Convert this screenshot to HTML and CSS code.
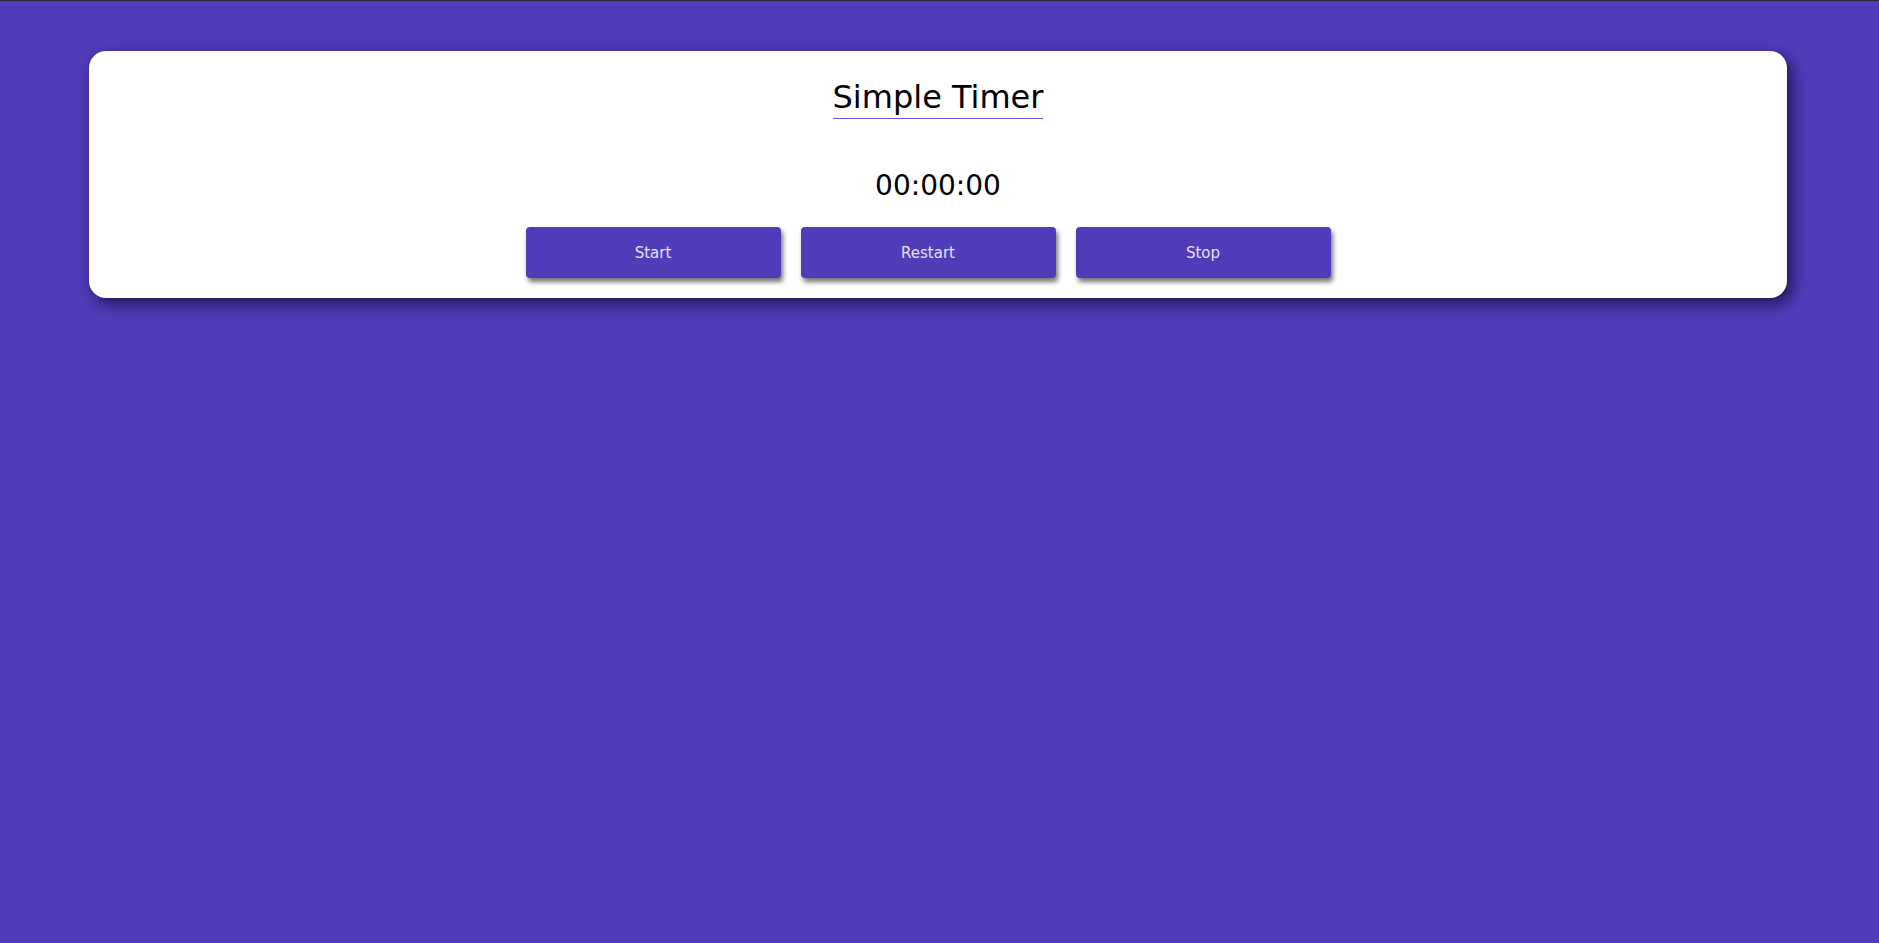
FILE: index.html
```html
<!DOCTYPE html>
<html>
<head>
<meta charset="utf-8">
<link rel="stylesheet" href="styles.css">
</head>
<body>
  <div class="card">
    <h1 class="title"><span>Simple Timer</span></h1>
    <div class="time">00:00:00</div>
    <div class="buttons">
      <button class="btn">Start</button>
      <button class="btn">Restart</button>
      <button class="btn">Stop</button>
    </div>
  </div>
</body>
</html>
```
FILE: styles.css
```css
html, body {
  margin: 0;
  padding: 0;
}
body {
  background: #503cb9;
  border-top: 1px solid #2a2838;
  min-height: 942px;
  font-family: "DejaVu Sans", "Open Sans", sans-serif;
}
.card {
  margin: 50px 92px 0 89px;
  background: #fff;
  border-radius: 17px;
  box-shadow: 5px 6px 16px rgba(20, 10, 60, 0.8);
  padding: 30px 0 20px;
  text-align: center;
}
.title {
  margin: 0;
  font-weight: 400;
  font-size: 32px;
  line-height: 1;
}
.title span {
  display: inline-block;
  padding-bottom: 5px;
  border-bottom: 1px solid #6a5ad0;
  color: #000;
}
.time {
  margin-top: 51px;
  font-size: 28px;
  line-height: 32px;
  color: #000;
}
.buttons {
  display: flex;
  justify-content: center;
  margin-top: 25px;
}
.btn {
  width: 255px;
  height: 51px;
  margin-right: 20px;
  background: #503cb9;
  color: #e6e0fa;
  border: none;
  border-radius: 4px;
  box-shadow: 2px 4px 5px rgba(0, 0, 0, 0.55);
  font-family: "DejaVu Sans", sans-serif;
  font-size: 15px;
}
```
